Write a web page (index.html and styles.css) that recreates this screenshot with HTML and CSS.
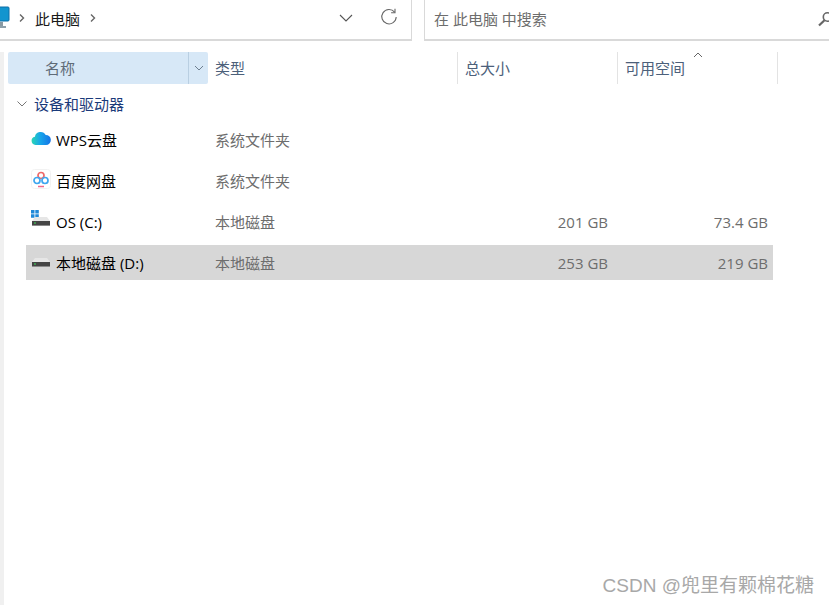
FILE: index.html
```html
<!DOCTYPE html>
<html lang="zh">
<head>
<meta charset="utf-8">
<title>此电脑</title>
<link rel="stylesheet" href="styles.css">
</head>
<body>
<div class="top">
  <div class="address">
    <svg class="pc" width="10" height="26" viewBox="0 0 10 26"><rect x="-8" y="2" width="17" height="14" rx="1" fill="#1295cf"/><rect x="-8" y="2" width="17" height="14" rx="1" fill="none" stroke="#0c6fa8"/><path d="M0 17h3v4H0z" fill="#8a9aa3"/><path d="M-3 21h9v2h-9z" fill="#8ea0aa"/></svg>
    <svg class="crumb" width="8" height="10" viewBox="0 0 8 10"><path d="M2 1.500 5.500 5 2 8.500" fill="none" stroke="#666" stroke-width="1.400"/></svg>
    <span class="path">此电脑</span>
    <svg class="crumb2" width="8" height="10" viewBox="0 0 8 10"><path d="M2 1.500 5.500 5 2 8.500" fill="none" stroke="#666" stroke-width="1.400"/></svg>
    <svg class="drop" width="14" height="8" viewBox="0 0 14 8"><path d="M1 1l6 6 6-6" fill="none" stroke="#555" stroke-width="1.100"/></svg>
    <svg class="refresh" width="18" height="18" viewBox="0 0 18 18"><path d="M14.600 4.200A7.200 7.200 0 1 0 16.200 9" fill="none" stroke="#666" stroke-width="1.100"/><path d="M15 .8v3.900h-3.900" fill="none" stroke="#666" stroke-width="1.100"/></svg>
  </div>
  <div class="search">
    <span class="hint">在 此电脑 中搜索</span>
    <svg class="lens" width="14" height="16" viewBox="0 0 14 16"><circle cx="9.500" cy="6" r="4.200" fill="none" stroke="#666" stroke-width="1.600"/><path d="M6.500 9.200 1 14.500" stroke="#666" stroke-width="2.200"/></svg>
  </div>
</div>
<div class="main">
  <div class="header">
    <div class="col-name"><span class="name-label">名称</span><span class="split"><svg width="10" height="6" viewBox="0 0 10 6"><path d="M1 1l4 4 4-4" fill="none" stroke="#6d7f90"/></svg></span></div>
    <div class="col-type">类型</div>
    <div class="col-num">总大小</div>
    <div class="col-num sorted">可用空间<svg class="sort" width="10" height="6" viewBox="0 0 10 6"><path d="M1 5l4-4 4 4" fill="none" stroke="#666"/></svg></div>
  </div>
  <div class="group">
    <svg width="10" height="6" viewBox="0 0 10 6"><path d="M.5.5 5 5 9.500.5" fill="none" stroke="#777"/></svg>
    <span>设备和驱动器</span>
  </div>
  <div class="row">
    <div class="cell-name">
      <svg class="icon" width="20" height="16" viewBox="0 0 20 16"><defs><linearGradient id="c" x1="0" x2="1"><stop offset="0" stop-color="#2bd6b4"/><stop offset=".45" stop-color="#17a6ea"/><stop offset="1" stop-color="#1573e6"/></linearGradient></defs><path d="M4.500 15a4.200 4.200 0 0 1-.6-8.300A5.800 5.800 0 0 1 14.700 5 4.800 4.800 0 0 1 15 15z" fill="url(#c)"/></svg>
      <span class="item-label">WPS云盘</span>
    </div>
    <div class="cell-type">系统文件夹</div><div class="cell-num"></div><div class="cell-num"></div>
  </div>
  <div class="row">
    <div class="cell-name">
      <svg class="icon" width="20" height="20" viewBox="0 0 20 20"><rect x=".5" y=".5" width="19" height="19" rx="3" fill="#fff" stroke="#f2f2f2"/><circle cx="10" cy="6.500" r="3" fill="none" stroke="#ef6a6a" stroke-width="1.700"/><circle cx="6" cy="11.500" r="3" fill="none" stroke="#3ea6ef" stroke-width="1.700"/><circle cx="14" cy="11.500" r="3" fill="none" stroke="#3ea6ef" stroke-width="1.700"/><path d="M7 17.500h6" stroke="#ef6a8a" stroke-width="1.500"/></svg>
      <span class="item-label">百度网盘</span>
    </div>
    <div class="cell-type">系统文件夹</div><div class="cell-num"></div><div class="cell-num"></div>
  </div>
  <div class="row">
    <div class="cell-name">
      <svg class="icon disk" width="20" height="20" viewBox="0 0 20 20"><path d="M0 0h3.500v3.500H0zM4.300 0h3.500v3.500H4.300zM0 4.300h3.500v3.500H0zM4.300 4.300h3.500v3.500H4.300z" fill="#1f88d8"/><path d="M1 11l3-4h12l3 4z" fill="#e6e6e6"/><rect x="1" y="11" width="18" height="5" fill="#454545"/><rect x="1" y="15" width="18" height="1" fill="#8a8a8a"/><rect x="3" y="12.500" width="2" height="1" fill="#3fdc5a"/></svg>
      <span class="item-label">OS (C:)</span>
    </div>
    <div class="cell-type">本地磁盘</div><div class="cell-num">201 GB</div><div class="cell-num">73.4 GB</div>
  </div>
  <div class="row selected">
    <div class="cell-name">
      <svg class="icon disk" width="20" height="20" viewBox="0 0 20 20"><path d="M1 11l3-4h12l3 4z" fill="#e6e6e6"/><rect x="1" y="11" width="18" height="5" fill="#454545"/><rect x="1" y="15" width="18" height="1" fill="#8a8a8a"/><rect x="3" y="12.500" width="2" height="1" fill="#3fdc5a"/></svg>
      <span class="item-label">本地磁盘 (D:)</span>
    </div>
    <div class="cell-type">本地磁盘</div><div class="cell-num">253 GB</div><div class="cell-num">219 GB</div>
  </div>
  <div class="watermark">CSDN @兜里有颗棉花糖</div>
</div>
</body>
</html>
```

FILE: styles.css
```css
html, body {
  margin: 0;
  padding: 0;
  height: 605px;
  overflow: hidden;
  background: #fff;
}
body {
  font-family: "Open Sans", "Noto Sans CJK SC", sans-serif;
  font-size: 15px;
  color: #000;
}
.top {
  display: flex;
  gap: 12px;
  height: 41px;
}
.address {
  box-sizing: border-box;
  width: 412px;
  height: 41px;
  border: solid #d9d9d9;
  border-width: 0 1px 2px 0;
  display: flex;
  align-items: center;
  padding-bottom: 3px;
}
.pc { flex: none; margin-right: 9px; }
.crumb { flex: none; margin-right: 9px; margin-left: -1px; }
.path { width: 54px; line-height: 20px; color: #1a1a1a; margin-top: 1px; }
.crumb2 { flex: none; }
.drop { flex: none; margin-left: 242px; }
.refresh { flex: none; margin-left: 27px; margin-top: -3px; }
.search {
  box-sizing: border-box;
  flex: 1;
  height: 41px;
  border: solid #d9d9d9;
  border-width: 0 0 2px 1px;
  display: flex;
  align-items: center;
  justify-content: space-between;
  padding: 0 0 3px 9px;
  min-width: 0;
}
.hint { color: #6d6d6d; }
.lens { flex: none; margin-right: -3px; margin-top: 2px; }
.main {
  height: 553px;
  margin-top: 11px;
  border-left: 4px solid #f0f0f0;
  box-sizing: border-box;
  position: relative;
}
.header {
  display: grid;
  grid-template-columns: 200px 250px 160px 160px;
  height: 32px;
  margin-left: 4px;
  color: #4c607a;
  line-height: 20px;
}
.col-name {
  background: #d7e8f7;
  border-radius: 2px;
  display: flex;
  align-items: center;
  color: #5f6b78;
}
.name-label { flex: 1; padding-left: 37px; }
.split {
  width: 19px;
  align-self: stretch;
  border-left: 1px solid #b9cfe2;
  display: flex;
  align-items: center;
  justify-content: center;
}
.col-type {
  display: flex;
  align-items: center;
  padding-left: 7px;
}
.col-num {
  display: flex;
  align-items: center;
  padding-left: 7px;
  border-left: 1px solid #e3e3e3;
  margin-left: -1px;
}
.sorted {
  border-right: 1px solid #e3e3e3;
  position: relative;
}
.sort { position: absolute; left: 75px; top: 0; }
.group {
  display: flex;
  align-items: center;
  gap: 7px;
  height: 22px;
  margin-top: 9px;
  margin-left: 13px;
  color: #1a3a7a;
  line-height: 20px;
}
.row {
  display: grid;
  grid-template-columns: 185px 242px 160px 160px;
  width: 747px;
  height: 35px;
  margin-left: 22px;
  margin-top: 6px;
  align-items: center;
  color: #6d6d6d;
  line-height: 20px;
}
.group + .row { margin-top: 7px; }
.selected { background: #d7d7d7; }
.cell-name {
  display: flex;
  align-items: center;
  color: #000;
}
.item-label { margin-left: 5px; white-space: nowrap; }
.icon { flex: none; margin-left: 5px; margin-top: -3px; }
.disk { margin-top: -4px; }
.cell-type { padding-left: 4px; }
.cell-num { text-align: right; padding-right: 5px; }
.watermark {
  position: absolute;
  right: 15px;
  bottom: 7px;
  font-family: "Liberation Sans", "Noto Sans CJK SC", sans-serif;
  font-size: 19px;
  line-height: 24px;
  color: #a8a8a8;
  white-space: nowrap;
}
```
